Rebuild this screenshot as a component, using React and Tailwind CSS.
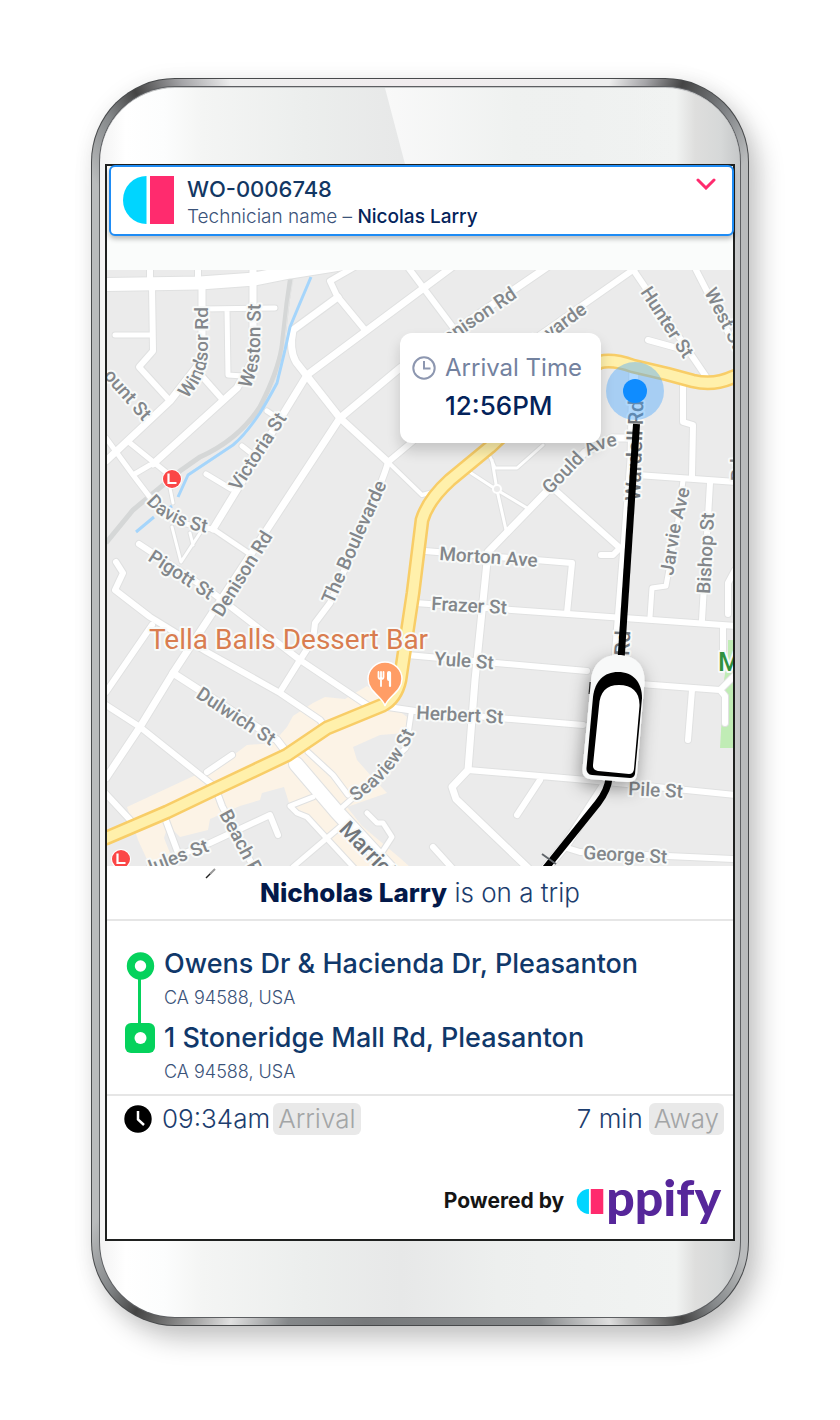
import { useState } from 'react'

const ROADS = [
  { w: 13, d: 'M106 284.500 L200 283 L255 279 L290 272 L340 264' },
  { w: 6, d: 'M150 268 V282 M198 268 V282' },
  { w: 6, d: 'M152 286 L153 351 L139 367 L170 401' },
  { w: 5, d: 'M115 335 H152' },
  { w: 7, d: 'M202 286 V360 L170 401 L106 461' },
  { w: 6, d: 'M200 374 L223 400' },
  { w: 5, d: 'M202 309 L275 308 M227 310 L228 375 L243 376' },
  { w: 7, d: 'M253 270 V360 L237 388 L153 464' },
  { w: 5, d: 'M106 438 L133 475 L152 500 M133 475 L150 465 M130 443 L167 473' },
  { w: 3, d: 'M167 473 L173 503 M172 527 L181 562 L200 533 M190 533 L193 545' },
  { w: 5, d: 'M152 500 Q165 524 213 529 L247 552' },
  { w: 7, d: 'M456 264 L307 375 L213 529' },
  { w: 5, d: 'M267 411 L273 415 M242 446 L251 453 M206 474 L231 489' },
  { w: 6, d: 'M356 266 L330 281 L337 296 L365 330' },
  { w: 7, d: 'M338 297 L293 330 Q289 350 296 362 L340 418 L388 462' },
  { w: 4, d: 'M388 462 L422 495 L433 492' },
  { w: 7, d: 'M550 265 L400 368 L340 418 L173 673 L140 727 L106 778' },
  { w: 6, d: 'M640 265 L540 335 L388 462 Q384 480 330 603 L315 623 L313 640 L300 660 L280 692' },
  { w: 6, d: 'M407 266 L470 350' },
  { w: 6, d: 'M632 268 L647 290 L707 378 M648 340 L677 348' },
  { w: 6, d: 'M694 266 L735 346' },
  { w: 6, d: 'M683 382 V422 L693 425 L692 476' },
  { w: 6, d: 'M637 475 L735 482' },
  { w: 5, d: 'M683 480 L678 520 L666 586 L652 588 L650 617' },
  { w: 6, d: 'M710 483 L702 620 M735 570 L728 583 V614' },
  { w: 6, d: 'M415 603 L735 626' },
  { w: 6, d: 'M425 551 L572 563 L567 613' },
  { w: 6, d: 'M407 655 L587 671 M640 684 L720 690 L735 675 M720 690 L725 696 V723 M692 690 L688 740 M723 627 V660' },
  { w: 6, d: 'M388 707 L415 711 L583 725' },
  { w: 7, d: 'M632 438 H612 L585 452 L488 552 L475 680 L468 770 L452 787 L456 799 L528 868' },
  { w: 6, d: 'M555 490 L620 548 L613 555 H601' },
  { w: 9, d: 'M634 365 L632 460 L617 647 L608 780 L567 843 L546 868' },
  { w: 6, d: 'M468 770 L587 780 L735 795 M540 780 L517 815' },
  { w: 6, d: 'M567 848 L580 852 L735 859 M433 847 L452 868' },
  { w: 3, d: 'M488 452 L495 468 L517 468 L543 445 M492 460 L497 490 L506 530 M468 471 L497 490 L527 508' },
  { w: 6, d: 'M139 544 L213 593 L300 660 L367 705' },
  { w: 6, d: 'M116 562 L123 573 L115 590 L150 617 L207 652 L280 693 L320 720 L326 728' },
  { w: 6, d: 'M152 625 L106 692' },
  { w: 7, d: 'M173 673 L277 740 L290 757' },
  { w: 6, d: 'M106 705 L140 727 L215 787 L222 806 L255 870 M207 772 L232 755' },
  { w: 6, d: 'M106 794 L133 823 M165 818 L178 853 M278 835 L270 815 L210 843 L150 867' },
  { w: 5, d: 'M313 797 L290 806 L297 813 L307 817 L356 870' },
  { w: 5, d: 'M340 827 L293 867 M308 752 L333 775 L348 795' },
  { w: 5, d: 'M337 812 L355 796 L406 748 L411 714' },
  { w: 5, d: 'M367 813 L377 823 H383 L392 837 L377 860' },
  { w: 14, d: 'M296 764 L337 812 L400 880' },
]

const HIGHWAY =
  'M745 373 L733 377 Q714 386 693 381 L667 374 L633 366 Q613 359 600 362 L540 400 L490 447 L450 480 Q428 500 422 520 L413 593 L400 680 Q396 698 383 705 L327 728 L287 755 L213 790 L167 812 L106 838'

// Labels that follow a straight street
const LABELS = [
  { text: 'ount St', x: 103, y: 376, rotate: 49 },
  { text: 'Victoria St', x: 239, y: 492, rotate: -57 },
  { text: 'Pigott St', x: 147, y: 560, rotate: 33 },
  { text: 'Denison Rd', x: 222, y: 618, rotate: -58 },
  { text: 'The Boulevarde', x: 333, y: 605, rotate: -66 },
  { text: 'Denison Rd', x: 518, y: 297, rotate: -34, anchor: 'end' },
  { text: 'The Boulevarde', x: 588, y: 312, rotate: -36, anchor: 'end' },
  { text: 'Hunter St', x: 640, y: 292, rotate: 57 },
  { text: 'West St', x: 704, y: 292, rotate: 63 },
  { text: 'Wardell Rd', x: 640, y: 501, rotate: -88, size: 21, dark: true },
  { text: 'Rd', x: 629, y: 656, rotate: -87, size: 21, dark: true },
  { text: 'Bishop St', x: 710, y: 594, rotate: -87 },
  { text: 'Rd', x: 744, y: 481, rotate: -90 },
  { text: 'Morton Ave', x: 439, y: 560, rotate: 4 },
  { text: 'Frazer St', x: 431, y: 610, rotate: 3 },
  { text: 'Yule St', x: 434, y: 665, rotate: 4 },
  { text: 'Herbert St', x: 416, y: 719, rotate: 3 },
  { text: 'Pile St', x: 628, y: 795, rotate: 3 },
  { text: 'George St', x: 583, y: 859, rotate: 3 },
  { text: 'Dulwich St', x: 195, y: 697, rotate: 33 },
  { text: 'Beach Rd', x: 219, y: 814, rotate: 62 },
  { text: 'Jules St', x: 210, y: 851, rotate: -21, anchor: 'end' },
]

// Labels that bend with the street
const CURVED_LABELS = [
  { id: 'windsor', text: 'Windsor Rd', d: 'M187 399 Q208 376 208 350 L208 285' },
  { id: 'weston', text: 'Weston St', d: 'M250 389 Q260 368 260 345 L261 285' },
  { id: 'davis', text: 'Davis St', d: 'M146 502 Q168 530 225 535' },
  { id: 'gould', text: 'Gould Ave', d: 'M550 495 L582 462 Q594 448 626 444' },
  { id: 'jarvie', text: 'Jarvie Ave', d: 'M673 576 L681 526 L696 465' },
  { id: 'seaview', text: 'Seaview St', d: 'M355 802 Q405 770 423 710' },
]

function BrandMark({ className }) {
  return (
    <svg viewBox="0 0 51 48" className={className} aria-hidden="true">
      <path d="M23.500 0 V48 A23.500 24 0 0 1 23.500 0 Z" fill="#00d5ff" />
      <rect x="27" width="24" height="48" fill="#ff2b6e" />
    </svg>
  )
}

function StationBadge({ x, y }) {
  return (
    <g transform={`translate(${x} ${y})`}>
      <circle r="10" fill="#fff" />
      <circle r="9" fill="#fb4646" />
      <path d="M-3.500 -5.500 V4 H4.500" fill="none" stroke="#fff" strokeWidth="2.200" />
    </g>
  )
}

function CityMap() {
  return (
    <svg
      viewBox="107 270 626 596"
      className="block w-full font-[Roboto,sans-serif]"
      role="img"
      aria-label="Map of the trip"
    >
      <defs>
        <filter id="vanShadow" x="-60%" y="-30%" width="220%" height="180%">
          <feDropShadow dx="-2" dy="7" stdDeviation="9" floodOpacity="0.4" />
        </filter>
        {CURVED_LABELS.map(({ id, d }) => (
          <path key={id} id={id} d={d} />
        ))}
      </defs>
      <rect x="107" y="270" width="626" height="596" fill="#ebebeb" />

      <path
        d="M127 807 L200 773 L223 763 L247 745 L273 743 L287 727 L293 716 L313 703 L325 697 L345 699 L367 686 L407 717 L405 733 L380 735 L353 747 L357 760 L372 777 L387 793 L347 807 L362 826 L400 858 L410 867 H355 L313 822 L290 806 L284 787 L262 793 L260 800 L240 806 L210 819 L208 830 L180 837 L168 825 L164 838 L170 853 L150 866 L138 840 Z"
        fill="#fcf3e6"
      />
      <path d="M734 640 H728 V655 L724 680 L720 748 H734 Z" fill="#c0ecb5" />

      <g fill="none">
        <path d="M292 268 L287 303 L282 347 Q278 372 260 407 Q238 440 200 457 L180 471 L133 510 L106 543" stroke="#d5d7d7" strokeWidth="5" />
        <path d="M295 268 L289 303 L284 347 Q281 372 263 407" stroke="#e4e5e5" strokeWidth="1" />
      </g>

      <g fill="none" strokeLinejoin="round" strokeLinecap="round">
        {ROADS.map(({ w, d }) => (
          <path key={d} d={d} stroke="#e0e1e1" strokeWidth={w + 2} />
        ))}
        {ROADS.map(({ w, d }) => (
          <path key={d} d={d} stroke="#fff" strokeWidth={w} />
        ))}
        <circle cx="497" cy="489" r="4" fill="#ebebeb" stroke="#fff" strokeWidth="2" />
        <path d="M311 277 L300 303 L290 327 L285 350 L277 383 Q268 400 260 413 Q245 435 233 445 L188 475 L178 497 M172 506 L168 509 M154 517 L136 532" stroke="#a5d5fb" strokeWidth="3" strokeLinecap="butt" />
        <path d={HIGHWAY} stroke="#f8cd67" strokeWidth="15" />
        <path d={HIGHWAY} stroke="#fff0ab" strokeWidth="10" />
      </g>

      <g fontWeight="500" stroke="#f8faf9" strokeWidth="4" strokeLinejoin="round" style={{ paintOrder: 'stroke' }}>
        {LABELS.map(({ text, x, y, rotate, anchor, size, dark }) => (
          <text
            key={`${text}-${x}`}
            transform={`translate(${x} ${y}) rotate(${rotate})`}
            textAnchor={anchor || 'start'}
            fontSize={size || 19}
            fill={dark ? '#70757a' : '#83878b'}
          >
            {text}
          </text>
        ))}
        {CURVED_LABELS.map(({ id, text }) => (
          <text key={id} fontSize="19" fill="#83878b">
            <textPath href={`#${id}`}>{text}</textPath>
          </text>
        ))}
        <text transform="translate(338 830) rotate(46)" fontSize="22" fill="#70757a">Marrickville</text>
        <text x="718" y="671" fontSize="26" fill="#2f9140">Ma</text>
        <text x="149" y="649" fontSize="28" fontWeight="400" fill="#d97d50">Tella Balls Dessert Bar</text>
      </g>

      <StationBadge x={172} y={479} />
      <StationBadge x={121} y={859} />

      <path d="M385 706 C383 697 368 692 368 679 A17 17 0 0 1 402 679 C402 692 387 697 385 706 Z" fill="#ff9d66" stroke="#fff" strokeWidth="1.500" />
      <g fill="none" stroke="#fff" strokeLinecap="round">
        <path d="M378.500 672 V677 Q378.500 679 381 679 Q383.500 679 383.500 677 V672 M381 672 V686" strokeWidth="1.800" />
        <path d="M390 673 V686" strokeWidth="2.200" />
        <path d="M389 673 V679" strokeWidth="4" />
      </g>

      <circle cx="635" cy="391" r="29" fill="#4aa8ff" fillOpacity="0.42" />
      <circle cx="635" cy="391" r="12" fill="#0f8cff" />

      <g fill="none" stroke="#000">
        <path d="M636.500 424 L621 660" strokeWidth="7" />
        <path d="M609 778 Q608 790 598 803 L545 869" strokeWidth="7" />
        <path d="M542 854 L556 864" stroke="#60656a" strokeWidth="2" />
      </g>

      <path d="M590.500 682 L589.500 694" stroke="#333" strokeWidth="2" />
      <path
        d="M618 655 C634 655 645 664 644.500 681 L637 774 Q636 783 627 782 L590 779 Q582 778 582.500 769 L591 681 C592 665 602 655 618 655 Z"
        fill="#f8f9f9"
        filter="url(#vanShadow)"
      />
      <path d="M618 672 C633 672 642 682 642 698 L635 774 Q634 778 630 778 L592 775 Q586 774 586.500 768 L593 697 C595 681 604 672 618 672 Z" fill="#000" />
      <path d="M619 685 C632 685 640 692 639.500 706 L634 769 Q633.500 774 629 774 L598 771 Q592.500 770 593 765 L599 706 C600 692 606 685 619 685 Z" fill="#fff" />
    </svg>
  )
}

function ArrivalCard() {
  return (
    <div className="absolute top-[63px] left-[293px] flex h-[110px] w-[201px] gap-[9px] rounded-xl bg-white pt-5 pl-3 shadow-[0_8px_14px_rgba(0,0,0,0.16)]">
      <svg viewBox="0 0 24 24" className="mt-[3px] size-6 shrink-0" fill="none" stroke="#8d97b0" strokeWidth="2" aria-hidden="true">
        <circle cx="12" cy="12" r="10.700" />
        <path d="M12 5 V12.500 H18.500" />
      </svg>
      <div className="whitespace-nowrap">
        <p className="text-[24px] leading-[30px] text-[#73829f]">Arrival Time</p>
        <p className="mt-2 text-[26px] leading-[30px] font-medium text-[#04235a]">12:56PM</p>
      </div>
    </div>
  )
}

function WorkOrderHeader({ open, onToggle }) {
  return (
    <button
      type="button"
      aria-expanded={open}
      onClick={onToggle}
      className="relative -mt-px -mr-px ml-[2px] flex h-[71px] items-start rounded-md border-2 border-[#1e8cf5] bg-white pt-[9px] pr-4 pl-3 text-left shadow-[0_3px_5px_rgba(0,0,0,0.25)]"
    >
      <BrandMark className="h-12 w-[51px]" />
      <span className="ml-[13px] flex-1 whitespace-nowrap">
        <span className="block text-[22px] leading-[26px] font-medium text-[#123763]">WO-0006748</span>
        <span className="block text-[19px] leading-[30px] font-light text-[#3b5379]">
          Technician name – <span className="font-medium text-[#04235a]">Nicolas Larry</span>
        </span>
      </span>
      <svg viewBox="0 0 20 12" className="mt-[2px] h-3 w-5" fill="none" stroke="#ff2b6e" strokeWidth="3" strokeLinecap="round" aria-hidden="true">
        <path d="M2 2 L10 10 L18 2" />
      </svg>
    </button>
  )
}

function Stop({ name, region }) {
  return (
    <li>
      <p className="text-[27px] leading-9 font-medium text-[#10386a]">{name}</p>
      <p className="text-[18px] leading-8 font-light text-[#3b5379]">{region}</p>
    </li>
  )
}

function TripPanel() {
  return (
    <section className="relative bg-white text-[#1c3d6e]">
      <svg viewBox="0 0 12 12" className="absolute top-[2px] left-[98px] size-3" aria-hidden="true">
        <path d="M1 10 L6 5" stroke="#222" strokeWidth="1.500" />
        <path d="M5 6 L10 1" stroke="#999" strokeWidth="2" />
      </svg>
      <h1 className="flex h-[55px] items-center justify-center border-b-2 border-[#e6e6e6] text-[26px] font-light whitespace-pre">
        <strong className="font-extrabold text-[#03194a]">Nicholas Larry</strong> is on a trip
      </h1>

      <div className="flex h-[175px] gap-[9px] border-b-2 border-[#e6e6e6] pt-[25px] pl-[18px] whitespace-nowrap">
        <svg viewBox="0 0 30 102" className="mt-[6px] h-[102px] w-[30px] shrink-0" aria-hidden="true">
          <path d="M14.500 24 V76" stroke="#05d25c" strokeWidth="3" />
          <circle cx="15.500" cy="14" r="9.700" fill="#fff" stroke="#05d25c" strokeWidth="8" />
          <rect y="71" width="30" height="30" rx="6" fill="#05d25c" />
          <circle cx="15.500" cy="86" r="6" fill="#fff" />
        </svg>
        <ul className="flex flex-col gap-[6px]">
          <Stop name="Owens Dr & Hacienda Dr, Pleasanton" region="CA 94588, USA" />
          <Stop name="1 Stoneridge Mall Rd, Pleasanton" region="CA 94588, USA" />
        </ul>
      </div>

      <div className="flex items-center justify-between pt-[7px] pr-[9px] pl-[17px] text-[26px] leading-8 font-light">
        <div className="flex items-center">
          <svg viewBox="0 0 28 28" className="mr-[10px] size-7" aria-hidden="true">
            <circle cx="14" cy="14" r="13.700" fill="#000" />
            <path d="M14 6 V14.500 L20 20" fill="none" stroke="#fff" strokeWidth="2.500" />
          </svg>
          <time>09:34am</time>
          <span className="ml-[3px] rounded-md bg-[#e9e9e9] px-[5px] text-[#a3a5a6]">Arrival</span>
        </div>
        <div className="flex items-center">
          <span>7 min</span>
          <span className="ml-[6px] rounded-md bg-[#e9e9e9] px-[5px] text-[#a3a5a6]">Away</span>
        </div>
      </div>

      <footer className="flex items-center justify-end pt-10 pr-3 pb-3">
        <span className="mr-3 text-[21px] font-bold text-[#151515]">Powered by</span>
        <a href="#appify" aria-label="appify" className="flex items-center">
          <BrandMark className="h-[25px] w-7" />
          <span className="-mt-2 ml-[2px] font-[Lato,sans-serif] text-[50px] leading-[60px] font-black text-[#56269a]">ppify</span>
        </a>
      </footer>
    </section>
  )
}

function App() {
  const [open, setOpen] = useState(false)

  return (
    <div className="min-h-screen bg-white px-[91px] py-[78px] font-[Inter,sans-serif]">
      <div className="rounded-[84px] bg-[#47494b] p-px shadow-[10px_14px_26px_rgba(0,0,0,0.22),0_0_22px_rgba(0,0,0,0.05)]">
        <div className="rounded-[83px] bg-[conic-gradient(#f1ecee_0deg,#ededed_17deg,#a5a5a8_20deg,#444_23deg,#7c7f82_27deg,#b9bbbc_31deg,#b9bbbc_150deg,#85888a_154deg,#444_157deg,#dedede_163deg,#85888a_169deg,#77797b_185deg,#85888a_192deg,#e0e0e0_197deg,#666_203deg,#444_205deg,#85888a_208deg,#b9bbbc_212deg,#b9bbbc_328deg,#85888a_332deg,#444_335deg,#a5a5a8_339deg,#ededed_343deg,#f1ecee_360deg)] p-[7px]">
          <div className="rounded-[76px] bg-[#5d5f62] p-px">
            <div className="overflow-hidden rounded-[75px] border-t border-[#c5c6c7] bg-[linear-gradient(90deg,#f3f3f3_0%,#fff_4%,#fcfdfd_10%,#f4f5f4_16%,#eceeed_32%,#e7e8e8_47%,#edefee_62%,#f1f3f2_90%,#dededd_93%,#d6d8d8_97%,#c5c7c8_100%)] px-[5px]">
              <div className="h-[76px] bg-[linear-gradient(90deg,#f9f9f9_44%,#eff1f0_65%,transparent_90%)] [clip-path:polygon(280px_0,100%_0,100%_100%,300px_100%)]" />
              <main className="flex flex-col border-2 border-[#1f2120] bg-[#fafcfb]">
                <WorkOrderHeader open={open} onToggle={() => setOpen(!open)} />
                <div className="relative mt-[34px] overflow-hidden">
                  <CityMap />
                  <ArrivalCard />
                </div>
                <TripPanel />
              </main>
              <div className="h-[76px]" />
            </div>
          </div>
        </div>
      </div>
    </div>
  )
}

export default App
